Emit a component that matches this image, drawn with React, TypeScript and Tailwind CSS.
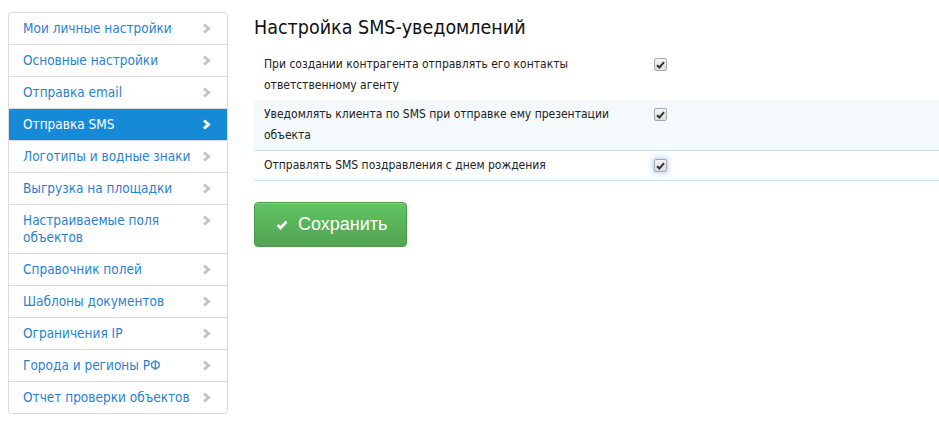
import React from 'react'

const menu = [
  'Мои личные настройки',
  'Основные настройки',
  'Отправка email',
  'Отправка SMS',
  'Логотипы и водные знаки',
  'Выгрузка на площадки',
  'Настраиваемые поля объектов',
  'Справочник полей',
  'Шаблоны документов',
  'Ограничения IP',
  'Города и регионы РФ',
  'Отчет проверки объектов',
]

const options = [
  { text: 'При создании контрагента отправлять его контакты ответственному агенту', shaded: false, focus: false },
  { text: 'Уведомлять клиента по SMS при отправке ему презентации объекта', shaded: true, focus: false },
  { text: 'Отправлять SMS поздравления с днем рождения', shaded: false, focus: true },
]

const Chevron = ({ active }: { active: boolean }) => (
  <svg width="9" height="11" viewBox="0 0 9 11" className="shrink-0 mt-[3px]">
    <polyline
      points="2,1.5 6.5,5.5 2,9.5"
      fill="none"
      stroke={active ? '#ffffff' : '#c4c4c4'}
      strokeWidth="3"
    />
  </svg>
)

const Check = ({ focus }: { focus: boolean }) => (
  <span
    className={
      'flex w-[13px] h-[13px] items-center justify-center rounded-[2px] border border-[#a9a9a9] bg-gradient-to-b from-[#f4f4f4] to-[#dcdcdc] ' +
      (focus ? 'shadow-[0_0_4px_2px_rgba(120,180,240,0.45)]' : '')
    }
  >
    <svg width="9" height="8" viewBox="0 0 9 8">
      <polyline points="1,4.2 3.4,6.5 8,1.2" fill="none" stroke="#333" strokeWidth="2" />
    </svg>
  </span>
)

export default function App() {
  return (
    <div className="w-[939px] h-[432px] bg-white flex gap-[26px] pl-[8px] pt-[12px] font-['DejaVu_Sans_Condensed','DejaVu_Sans',sans-serif]">
      {/* left menu */}
      <ul className="w-[220px] self-start rounded-[4px] border border-[#dcdcdc] overflow-hidden text-[13.5px] leading-[17px]">
        {menu.map((item, i) => {
          const active = item === 'Отправка SMS'
          const wraps = item === 'Настраиваемые поля объектов'
          return (
            <li
              key={item}
              className={
                'flex justify-between gap-1 pl-[14px] pr-[16px] py-[7px] ' +
                (i > 0 ? 'border-t border-[#dcdcdc] ' : '') +
                (active ? 'bg-[#168ad7] text-white' : 'text-[#2b7fd2]')
              }
            >
              <span className={wraps ? 'w-[150px]' : 'whitespace-nowrap'}>{item}</span>
              <Chevron active={active} />
            </li>
          )
        })}
      </ul>

      {/* settings */}
      <div className="flex-1 pt-[4px]">
        <h2 className="text-[19.5px] leading-[24px] text-[#111]">Настройка SMS-уведомлений</h2>
        <div className="mt-[10px] text-[12px] leading-[21px] text-[#222]">
          {options.map((o, i) => (
            <div
              key={i}
              className={
                'flex py-[4px] ' +
                (o.shaded ? 'bg-[#f4f9fc] ' : '') +
                (i > 0 ? 'border-b border-[#c9e2f3]' : '')
              }
            >
              <div className="w-[400px] pl-[10px] pr-[20px]">{o.text}</div>
              <div className="pt-[4px]">
                <Check focus={o.focus} />
              </div>
            </div>
          ))}
        </div>

        <button className="mt-[21px] flex items-center gap-[10px] h-[45px] w-[153px] pl-[21px] rounded-[4px] border border-[#4a9a4a] bg-gradient-to-b from-[#62c462] to-[#51a351] text-white text-[18px] font-['Liberation_Sans',sans-serif] shadow-[inset_0_1px_0_rgba(255,255,255,0.2)]">
          <svg width="12" height="10" viewBox="0 0 12 10">
            <polyline points="1.5,5 4.5,8 10.5,1.5" fill="none" stroke="#fff" strokeWidth="2.6" />
          </svg>
          Сохранить
        </button>
      </div>
    </div>
  )
}
